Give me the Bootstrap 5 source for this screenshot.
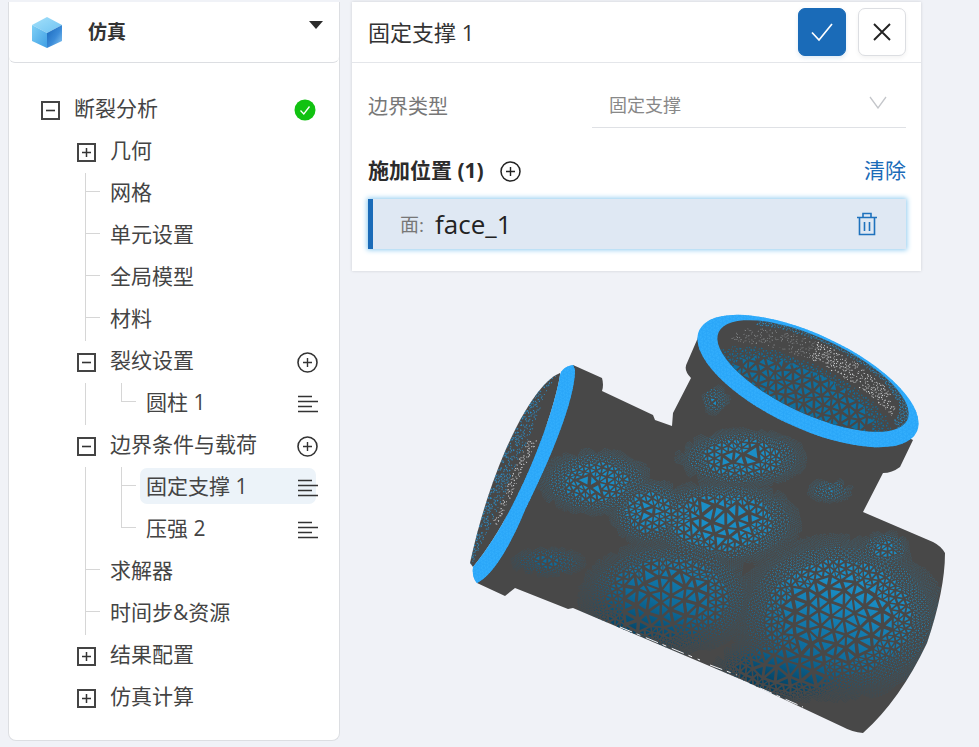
<!DOCTYPE html>
<html lang="en">
<head>
    <meta charset="UTF-8">
    <meta name="viewport" content="width=device-width, initial-scale=1.0">
    <title>仿真</title>
    <link href="https://cdn.jsdelivr.net/npm/bootstrap@5.3.0/dist/css/bootstrap.min.css" rel="stylesheet">
    <style>
        body {
            background: #f0f2f7;
            height: 747px;
            overflow: hidden;
            font-family: "Open Sans", "Noto Sans CJK SC", sans-serif;
            color: #444;
        }
        .stage { position: absolute; inset: 0; }
        .page-wrap { position: relative; padding: 2px 0 0 8px; gap: 12px; }

        .side-panel {
            width: 332px;
            height: 739px;
            background: #fff;
            border: 1px solid #dcdee2;
            border-top: 0;
            border-radius: 0 0 8px 8px;
        }
        .side-head {
            height: 61px;
            padding-left: 23px;
            border-bottom: 1px solid #dcdee2;
            border-radius: 6px;
        }
        .side-title { font-size: 19px; font-weight: 700; margin-left: 26px; color: #333; }
        .side-caret { margin: 19px 16px 0 auto; align-self: flex-start; }

        .tree-list { padding-top: 26px; }
        .tree-row {
            position: relative;
            height: 42px;
            font-size: 21px;
            padding-right: 22px;
        }
        .tree-row .lbl { margin-top: -2px; position: relative; }
        .lvl-0 { padding-left: 32px; }
        .lvl-1 { padding-left: 68px; }
        .lvl-1.leaf { padding-left: 101px; }
        .lvl-2.leaf { padding-left: 137px; }
        .tree-box { width: 19px; height: 19px; margin-right: 14px; flex: none; }
        .tree-row .end-ic { margin-left: auto; flex: none; position: relative; }

        /* guide lines */
        .guide-a::before, .tick-a::after, .tick-b::after {
            content: "";
            position: absolute;
            background: #d6d6d6;
        }
        .guide-a::before { left: 76px; top: 0; bottom: 0; width: 1px; }
        .tick-a::after { left: 76px; top: 18px; width: 15px; height: 1px; }
        .tick-b::after { left: 112px; top: 18px; width: 15px; height: 1px; }
        .guide-b > .inner-line {
            position: absolute; left: 112px; top: 0; width: 1px; bottom: 0; background: #d6d6d6;
        }
        .guide-b.last > .inner-line { bottom: 23px; }
        .row-active > .row-hl {
            position: absolute; left: 131px; top: 1px; width: 176px; height: 36px;
            background: #ecf3f9; border-radius: 7px;
        }

        .edit-panel {
            position: relative;
            width: 569px;
            height: 269px;
            background: #fff;
            box-shadow: 0 0 3px rgba(0, 0, 0, .14);
        }
        .edit-head {
            height: 61px;
            padding: 0 15px 0 16px;
            border-bottom: 1px solid #e4e6ea;
            font-size: 22px;
            color: #333;
        }
        .act-btn {
            width: 48px; height: 48px; padding: 0;
            display: flex; align-items: center; justify-content: center;
            border-radius: 7px;
        }
        .act-wrap { gap: 12px; }
        .act-ok { background: #1a6bb8; border-color: #1a6bb8; box-shadow: 0 2px 4px rgba(26, 107, 184, .15); }
        .act-no { background: #fff; border: 1px solid #dcdee2; box-shadow: 0 2px 4px rgba(0, 0, 0, .05); }
        .edit-body { padding: 0 15px 0 16px; }
        .field-row { height: 65px; }
        .field-lbl { width: 224px; font-size: 20px; color: #777; padding-top: 29px; }
        .field-sel {
            flex: 1; height: 65px;
            padding: 29px 19px 0 17px;
            font-size: 18px; color: #888;
            border-bottom: 1px solid #dfe1e5;
        }
        .apply-row { margin-top: 24px; height: 38px; }
        .apply-title { font-size: 21px; font-weight: 700; color: #2b2b2b; }
        .apply-clear { font-size: 21px; color: #1a6bb8; text-decoration: none; }
        .face-item {
            height: 50px;
            margin-top: 9px;
            background: #dfe8f3;
            border-left: 5px solid #1a6bb8;
            box-shadow: 0 0 5px 1px #8ecbf0;
            padding: 0 28px 0 27px;
        }
        .face-key { font-size: 19px; color: #777; margin-right: 11px; margin-top: 3px; }
        .face-val { font-size: 26px; font-weight: 500; color: #222; line-height: 1; }
    </style>
</head>
<body>
    <div class="stage">
        <svg id="model" width="979" height="747" viewBox="0 0 979 747" xmlns="http://www.w3.org/2000/svg">
            <defs>
                <linearGradient id="bodyGrad" gradientUnits="userSpaceOnUse" x1="815" y1="575" x2="770" y2="705">
                    <stop offset="0" stop-color="#1a8ec6"/>
                    <stop offset=".55" stop-color="#0d6b9b"/>
                    <stop offset="1" stop-color="#012f49"/>
                </linearGradient>
                <clipPath id="clipBody">
                    <path d="M573,365 L602,378 Q604,385 602,391 L653,415 L655,420 L672,426 L673,413 L691,378 Q683,370 687,363 L700,333 L913,440 L900,467 Q892,473 883,473 L863,512 L933,542 Q941,546 945,553 Q945,590 927,643 Q900,700 863,733 Q852,732 843,727 L747,682 L573,608 L568,609 L515,588 L505,596 L477,583 Z"/>
                </clipPath>
                <clipPath id="clipLeftIn">
                    <path d="M560,373 C530,385 490,470 470,563 L473,567 C520,510 555,410 560,375 Z"/>
                </clipPath>
                <clipPath id="clipLeftRing">
                    <path d="M573,365 C566,366 561,370 560,375 C555,410 520,510 473,567 C472,575 474,580 477,583 C495,575 515,535 525,510 C550,460 575,400 575,370 Z"/>
                </clipPath>
                <clipPath id="clipTopIn">
                    <ellipse cx="813" cy="376" rx="104" ry="38" transform="rotate(25 813 376)"/>
                </clipPath>
                <clipPath id="clipTopRing">
                    <ellipse cx="808" cy="381" rx="120" ry="47" transform="rotate(25 808 381)"/>
                </clipPath>
            </defs>
            <path d="M573,365 L602,378 Q604,385 602,391 L653,415 L655,420 L672,426 L673,413 L691,378 Q683,370 687,363 L700,333 L913,440 L900,467 Q892,473 883,473 L863,512 L933,542 Q941,546 945,553 Q945,590 927,643 Q900,700 863,733 Q852,732 843,727 L747,682 L573,608 L568,609 L515,588 L505,596 L477,583 Z" fill="#484848"/>
            <g clip-path="url(#clipBody)" id="bodyMesh"></g>
            <path d="M620,627 L700,660 M710,665 L737,675 M760,688 L803,707" stroke="#eef0f4" stroke-width="1" stroke-dasharray="13 5 4 6" fill="none"/>
            <path d="M560,373 C530,385 490,470 470,563 L473,567 C520,510 555,410 560,375 Z" fill="#484848"/>
            <g clip-path="url(#clipLeftIn)" id="leftMesh"></g>
            <path d="M573,365 C566,366 561,370 560,375 C555,410 520,510 473,567 C472,575 474,580 477,583 C495,575 515,535 525,510 C550,460 575,400 575,370 Z" fill="#2aa6f8"/>
            <g clip-path="url(#clipLeftRing)" id="leftRingMesh"></g>
            <ellipse cx="808" cy="381" rx="120" ry="47" transform="rotate(25 808 381)" fill="#2aa6f8"/>
            <g clip-path="url(#clipTopRing)" id="topRingMesh"></g>
            <ellipse cx="813" cy="376" rx="104" ry="38" transform="rotate(25 813 376)" fill="#484848"/>
            <g clip-path="url(#clipTopIn)" id="topMesh"></g>
        </svg>
    </div>

    <div class="page-wrap d-flex align-items-start">
        <aside class="side-panel">
            <div class="side-head d-flex align-items-center">
                <svg width="30" height="31" viewBox="0 0 30 31" aria-hidden="true">
                    <defs>
                        <linearGradient id="cubeT" x1="0" y1="0" x2="1" y2="1">
                            <stop offset="0" stop-color="#a3e0fa"/><stop offset="1" stop-color="#6fc3f2"/>
                        </linearGradient>
                        <linearGradient id="cubeL" x1="0" y1="0" x2="1" y2="1">
                            <stop offset="0" stop-color="#7fd0f6"/><stop offset="1" stop-color="#3f9fe4"/>
                        </linearGradient>
                        <linearGradient id="cubeR" x1="0" y1="0" x2="1" y2="1">
                            <stop offset="0" stop-color="#1766ba"/><stop offset=".55" stop-color="#3b8bd8"/><stop offset="1" stop-color="#8fcdf5"/>
                        </linearGradient>
                    </defs>
                    <path d="M15 0 30 8 15 16 0 8Z" fill="url(#cubeT)"/>
                    <path d="M0 8 15 16V31L0 24Z" fill="url(#cubeL)"/>
                    <path d="M30 8 15 16V31L30 24Z" fill="url(#cubeR)"/>
                </svg>
                <span class="side-title">仿真</span>
                <svg class="side-caret" width="14" height="8" viewBox="0 0 14 8" aria-hidden="true"><path d="M0 0H14L7 8Z" fill="#2b2b2b"/></svg>
            </div>
            <div class="tree-list" id="tree"></div>
        </aside>

        <section class="edit-panel">
            <div class="edit-head d-flex align-items-center justify-content-between">
                <span>固定支撑 1</span>
                <div class="act-wrap d-flex">
                    <button class="btn btn-primary act-btn act-ok" aria-label="确定">
                        <svg width="24" height="20" viewBox="0 0 24 20"><path d="M2 10.5 9 18 22 2" fill="none" stroke="#fff" stroke-width="1.7"/></svg>
                    </button>
                    <button class="btn act-btn act-no" aria-label="关闭">
                        <svg width="20" height="20" viewBox="0 0 20 20"><path d="M2 2 18 18M18 2 2 18" fill="none" stroke="#222" stroke-width="1.9"/></svg>
                    </button>
                </div>
            </div>
            <div class="edit-body">
                <div class="field-row d-flex">
                    <div class="field-lbl">边界类型</div>
                    <div class="field-sel d-flex justify-content-between">
                        <span>固定支撑</span>
                        <svg class="mt-1" width="18" height="13" viewBox="0 0 18 13"><path d="M1 1 9 12 17 1" fill="none" stroke="#c4c6ca" stroke-width="1.3"/></svg>
                    </div>
                </div>
                <div class="apply-row d-flex align-items-center">
                    <span class="apply-title">施加位置 (1)</span>
                    <svg class="ms-3" width="21" height="21" viewBox="0 0 21 21"><circle cx="10.5" cy="10.5" r="9.5" fill="none" stroke="#222" stroke-width="1.5"/><path d="M10.5 6v9M6 10.5h9" stroke="#222" stroke-width="1.4"/></svg>
                    <a class="apply-clear ms-auto" href="#">清除</a>
                </div>
                <div class="face-item d-flex align-items-center">
                    <span class="face-key">面:</span>
                    <span class="face-val">face_1</span>
                    <svg class="ms-auto" width="22" height="24" viewBox="0 0 22 24"><path d="M1 5.5H21M7 5V1.5H15V5M3.5 6V22.5H18.5V6M8.5 10V19M13.5 10V19" fill="none" stroke="#1f72bd" stroke-width="1.6"/></svg>
                </div>
            </div>
        </section>
    </div>

    <script src="https://cdn.jsdelivr.net/npm/bootstrap@5.3.0/dist/js/bootstrap.bundle.min.js"></script>
    <script>
        // tree rows
        const boxMinus = '<svg class="tree-box" viewBox="0 0 19 19"><rect x="1" y="1" width="17" height="17" fill="none" stroke="#444" stroke-width="2"/><path d="M5 9.5h9" stroke="#333" stroke-width="1.6"/></svg>';
        const boxPlus = '<svg class="tree-box" viewBox="0 0 19 19"><rect x="1" y="1" width="17" height="17" fill="none" stroke="#444" stroke-width="2"/><path d="M5 9.5h9M9.5 5v9" stroke="#333" stroke-width="1.5"/></svg>';
        const addIc = '<svg class="end-ic" width="21" height="21" viewBox="0 0 21 21" style="margin-right:-1px"><circle cx="10.5" cy="10.5" r="9.5" fill="none" stroke="#333" stroke-width="1.6"/><path d="M10.5 6v9M6 10.5h9" stroke="#333" stroke-width="1.4"/></svg>';
        const listIc = '<svg class="end-ic" width="20" height="18" viewBox="0 0 20 18" style="margin-right:-1px"><path d="M0 1.5H14M0 6.5H20M0 11.5H14M0 16.5H20" stroke="#333" stroke-width="1.6"/></svg>';
        const okIc = '<svg class="end-ic" width="22" height="22" viewBox="0 0 22 22" style="margin-right:1px"><circle cx="11" cy="11" r="10.5" fill="#11c211"/><path d="M6.5 11.5 9.8 15 15.5 7.5" fill="none" stroke="#fff" stroke-width="1.3"/></svg>';

        const rows = [
            { t: '断裂分析', cls: 'lvl-0', box: boxMinus, end: okIc },
            { t: '几何', cls: 'lvl-1', box: boxPlus },
            { t: '网格', cls: 'lvl-1 leaf guide-a tick-a' },
            { t: '单元设置', cls: 'lvl-1 leaf guide-a tick-a' },
            { t: '全局模型', cls: 'lvl-1 leaf guide-a tick-a' },
            { t: '材料', cls: 'lvl-1 leaf guide-a tick-a' },
            { t: '裂纹设置', cls: 'lvl-1', box: boxMinus, end: addIc },
            { t: '圆柱 1', cls: 'lvl-2 leaf guide-a guide-b last tick-b', end: listIc, inner: true },
            { t: '边界条件与载荷', cls: 'lvl-1', box: boxMinus, end: addIc },
            { t: '固定支撑 1', cls: 'lvl-2 leaf guide-a guide-b tick-b row-active', end: listIc, inner: true },
            { t: '压强 2', cls: 'lvl-2 leaf guide-a guide-b last tick-b', end: listIc, inner: true },
            { t: '求解器', cls: 'lvl-1 leaf guide-a tick-a' },
            { t: '时间步&资源', cls: 'lvl-1 leaf guide-a tick-a' },
            { t: '结果配置', cls: 'lvl-1', box: boxPlus },
            { t: '仿真计算', cls: 'lvl-1', box: boxPlus }
        ];
        document.getElementById('tree').innerHTML = rows.map(r =>
            `<div class="tree-row d-flex align-items-center ${r.cls}">` +
            (r.cls.includes('row-active') ? '<span class="row-hl"></span>' : '') +
            (r.inner ? '<span class="inner-line"></span>' : '') +
            (r.box || '') + `<span class="lbl">${r.t.replace('&', '&amp;')}</span>` + (r.end || '') +
            '</div>').join('');

        // fake fem mesh on the model
        const NS = 'http://www.w3.org/2000/svg';
        const ANG = 25 * Math.PI / 180, CA = Math.cos(ANG), SA = Math.sin(ANG);
        function rnd(i, j, k) {
            const s = Math.sin(i * 127.1 + j * 311.7 + k * 74.7) * 43758.5453;
            return s - Math.floor(s);
        }
        function vert(i, j, s) {
            const u = (i + j / 2) * s, v = j * s * .866;
            const jit = s * .22;
            return [700 + u * CA - v * SA + (rnd(i, j, s) - .5) * jit * 2,
                    500 + u * SA + v * CA + (rnd(j, i, s + 1) - .5) * jit * 2];
        }
        function triPath(a, b, c, f) {
            const cx = (a[0] + b[0] + c[0]) / 3, cy = (a[1] + b[1] + c[1]) / 3;
            const p = q => (cx + (q[0] - cx) * f).toFixed(1) + ' ' + (cy + (q[1] - cy) * f).toFixed(1);
            return `M${p(a)}L${p(b)}L${p(c)}Z`;
        }
        function addPath(id, d, fill, op) {
            const el = document.createElementNS(NS, 'path');
            el.setAttribute('d', d);
            el.setAttribute('fill', fill);
            if (op) el.setAttribute('fill-opacity', op);
            document.getElementById(id).appendChild(el);
        }
        function mid(a, b) { return [(a[0] + b[0]) / 2, (a[1] + b[1]) / 2]; }

        // x, y, rx, ry, strength
        const spots = [
            [838, 618, 62, 48, 1], [668, 598, 52, 34, .95], [722, 522, 48, 26, .8], [742, 458, 42, 19, .62],
            [596, 482, 38, 22, .55], [650, 512, 26, 22, .6], [790, 668, 44, 20, 1], [655, 622, 44, 12, .8],
            [548, 562, 28, 11, .36], [885, 550, 18, 14, .4], [830, 490, 18, 10, .3], [715, 400, 12, 12, .3]
        ];
        function heat(x, y) {
            let h = 0;
            for (const s of spots) {
                const dx = (x - s[0]) / s[2], dy = (y - s[1]) / s[3];
                h = Math.max(h, s[4] * Math.exp(-(dx * dx + dy * dy) * .9));
            }
            return h;
        }
        const buckets = ['', '', '', ''];
        function split(a, b, c, depth) {
            const cx = (a[0] + b[0] + c[0]) / 3, cy = (a[1] + b[1] + c[1]) / 3;
            const h = heat(cx, cy);
            if (h < .06) return;
            const want = h > .5 ? 0 : (h > .28 ? 1 : (h > .14 ? 2 : 3));
            if (depth < want) {
                const ab = mid(a, b), bc = mid(b, c), ca = mid(c, a);
                split(a, ab, ca, depth + 1);
                split(ab, b, bc, depth + 1);
                split(ca, bc, c, depth + 1);
                split(ab, bc, ca, depth + 1);
                return;
            }
            const f = [.42 + h * .3, .38 + h * .5, .3 + h * .6, .2 + h * 1.2][depth];
            buckets[depth] += triPath(a, b, c, f);
        }
        for (let i = -60; i < 60; i++) {
            for (let j = -40; j < 40; j++) {
                const a = vert(i, j, 14), b = vert(i + 1, j, 14), c = vert(i, j + 1, 14), d = vert(i + 1, j + 1, 14);
                split(a, b, c, 0);
                split(b, d, c, 0);
            }
        }
        buckets.forEach(d => addPath('bodyMesh', d, 'url(#bodyGrad)'));

        // small-cell pass for rings and the two inner walls
        function fine(size, x0, x1, y0, y1, f, fill, target) {
            let d = '';
            for (let i = -180; i < 180; i++) {
                for (let j = -130; j < 130; j++) {
                    const a = vert(i, j, size), b = vert(i + 1, j, size), c = vert(i, j + 1, size), e = vert(i + 1, j + 1, size);
                    if (a[0] < x0 - 9 || a[0] > x1 + 9 || a[1] < y0 - 9 || a[1] > y1 + 9) continue;
                    [[a, b, c], [b, e, c]].forEach(t => {
                        const cx = (t[0][0] + t[1][0] + t[2][0]) / 3, cy = (t[0][1] + t[1][1] + t[2][1]) / 3;
                        const k = f(cx, cy);
                        if (k > 0) d += triPath(t[0], t[1], t[2], k);
                    });
                }
            }
            addPath(target, d, fill);
        }
        function uvTop(x, y) {
            const dx = x - 813, dy = y - 376;
            return [(dx * CA + dy * SA) / 104, (-dx * SA + dy * CA) / 38];
        }
        function floorR(p) {
            const dv = p[1] - .65;
            return Math.sqrt(p[0] * p[0] + dv * dv);
        }
        // floor of the upper opening
        fine(10, 710, 915, 320, 440, (x, y) => {
            const r = floorR(uvTop(x, y));
            return r < .72 ? .62 : 0;
        }, '#0f6f9e', 'topMesh');
        fine(5, 710, 915, 320, 440, (x, y) => {
            const r = floorR(uvTop(x, y));
            return r >= .72 && r < .94 ? .58 - (r - .72) : 0;
        }, '#0f6f9e', 'topMesh');
        // holes on the upper wall
        fine(3.4, 710, 915, 320, 440, (x, y) => {
            const p = uvTop(x, y), r = floorR(p), o = Math.hypot(p[0], p[1]);
            if (r < 1 || o > .86 || p[0] < -.1) return 0;
            return rnd(Math.round(x * 3), Math.round(y * 3), 9) > .35 ? .44 : 0;
        }, '#e2e4e6', 'topMesh');
        fine(3.4, 710, 915, 320, 440, (x, y) => {
            const p = uvTop(x, y), r = floorR(p), o = Math.hypot(p[0], p[1]);
            if (r < 1 || o > .86 || p[0] >= -.1) return 0;
            return rnd(Math.round(x * 3), Math.round(y * 3), 9) > .45 ? .36 : 0;
        }, '#a6aaad', 'topMesh');
        fine(3.4, 710, 915, 320, 440, (x, y) => {
            const p = uvTop(x, y), r = floorR(p), o = Math.hypot(p[0], p[1]);
            return o > .9 && r > 1 && p[0] > -.7 ? .5 : 0;
        }, '#2392cf', 'topMesh');

        // left opening, w runs from the ring edge (0) to the outer edge (1)
        function lerpTable(tb, y) {
            for (let i = 1; i < tb.length; i++) {
                if (y <= tb[i][0]) {
                    const k = (y - tb[i - 1][0]) / (tb[i][0] - tb[i - 1][0]);
                    return tb[i - 1][1] + (tb[i][1] - tb[i - 1][1]) * k;
                }
            }
            return tb[tb.length - 1][1];
        }
        const edgeR = [[365, 562], [440, 541], [520, 503], [570, 470]];
        const edgeL = [[365, 562], [400, 530], [470, 497], [520, 481], [570, 468]];
        function leftW(x, y) {
            const r = lerpTable(edgeR, y), l = lerpTable(edgeL, y);
            return (r - x) / Math.max(1, r - l);
        }
        fine(3.4, 465, 565, 370, 570, (x, y) => {
            const w = leftW(x, y);
            if (w < .42 || rnd(Math.round(x * 3), Math.round(y * 3), 5) < .4) return 0;
            return .35 + .25 * w;
        }, '#2a90cc', 'leftMesh');
        fine(3.4, 465, 565, 430, 540, (x, y) => {
            const w = leftW(x, y);
            if (y < 440 || y > 525 || w < .12 || w >= .42) return 0;
            return rnd(Math.round(x * 3), Math.round(y * 3), 6) > .4 ? .46 : 0;
        }, '#e2e4e8', 'leftMesh');

        // ring texture
        fine(3.6, 465, 580, 360, 590, () => .7, '#33aefc', 'leftRingMesh');
        fine(4, 695, 925, 310, 455, () => .7, '#33aefc', 'topRingMesh');
    </script>
</body>
</html>
